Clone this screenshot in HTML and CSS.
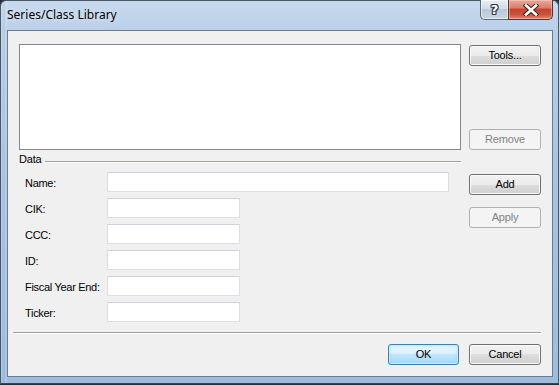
FILE: index.html
```html
<!DOCTYPE html>
<html>
<head>
<meta charset="utf-8">
<link rel="stylesheet" href="styles.css">
</head>
<body>
<div class="window">
  <div class="titlebar">
    <div class="title">Series/Class Library</div>
    <div class="caption">
      <div class="cap-btn help"><span class="q">?</span></div>
      <div class="cap-btn close">
        <svg width="16" height="12" viewBox="0 0 16 12">
          <path d="M3 1.5 L13 10.5 M13 1.5 L3 10.5" stroke="#3a2a28" stroke-width="4.6" stroke-linecap="square" fill="none"/>
          <path d="M3 1.5 L13 10.5 M13 1.5 L3 10.5" stroke="#ffffff" stroke-width="2.6" stroke-linecap="square" fill="none"/>
        </svg>
      </div>
    </div>
  </div>
  <div class="client">
    <div class="top">
      <div class="listbox"></div>
      <div class="side side-top">
        <button class="btn">Tools...</button>
        <button class="btn disabled">Remove</button>
      </div>
    </div>
    <div class="main">
      <div class="left">
        <div class="group-head"><span class="group-label">Data</span><span class="rule"></span></div>
        <div class="fields">
          <div class="row"><span class="label">Name:</span><input class="input wide" type="text"></div>
          <div class="row"><span class="label">CIK:</span><input class="input" type="text"></div>
          <div class="row"><span class="label">CCC:</span><input class="input" type="text"></div>
          <div class="row"><span class="label">ID:</span><input class="input" type="text"></div>
          <div class="row"><span class="label">Fiscal Year End:</span><input class="input" type="text"></div>
          <div class="row"><span class="label">Ticker:</span><input class="input" type="text"></div>
        </div>
      </div>
      <div class="side side-mid">
        <button class="btn">Add</button>
        <button class="btn disabled">Apply</button>
      </div>
    </div>
    <div class="sep"></div>
    <div class="footer">
      <button class="btn default ok">OK</button>
      <button class="btn">Cancel</button>
    </div>
  </div>
</div>
</body>
</html>
```

FILE: styles.css
```css
* { box-sizing: border-box; }

html, body {
  margin: 0;
  padding: 0;
}

body {
  width: 559px;
  height: 385px;
  overflow: hidden;
  background: #26303a;
  font-family: "Liberation Sans", Arial, sans-serif;
  font-size: 11px;
}

.window {
  width: 559px;
  height: 384px;
  border: 1px solid #4a5866;
  border-bottom-color: #3a4552;
  border-radius: 6px 6px 0 0;
  background:
    linear-gradient(90deg, rgba(255,255,255,0.18) 0, rgba(120,160,200,0.15) 3px, rgba(255,255,255,0.2) 5px, rgba(0,0,0,0) 7px),
    linear-gradient(180deg, #c7d9ee 0%, #b9cfe8 8%, #aac5e3 40%, #9dbcdd 100%);
  display: flex;
  flex-direction: column;
}

.titlebar {
  height: 29px;
  display: flex;
  justify-content: space-between;
  align-items: flex-start;
  flex-shrink: 0;
}

.title {
  font-family: "Noto Sans", "Open Sans", sans-serif;
  font-size: 12px;
  line-height: 16px;
  color: #000;
  padding: 6px 0 0 6px;
  text-shadow: 0 0 6px rgba(255,255,255,0.9);
}

.caption {
  display: flex;
  margin-top: -1px;
  margin-right: 5px;
}

.cap-btn {
  height: 20px;
  display: flex;
  align-items: center;
  justify-content: center;
}

.help {
  width: 28px;
  border: 1px solid #5b6a7c;
  border-top: none;
  border-right: none;
  border-radius: 0 0 0 5px;
  background: linear-gradient(180deg, #e7edf4 0%, #d3dde8 45%, #b9c8d9 50%, #c9d6e4 100%);
  box-shadow: inset 0 0 0 1px rgba(255,255,255,0.55);
}

.q {
  font-family: "DejaVu Sans", sans-serif;
  font-weight: bold;
  font-size: 13px;
  line-height: 13px;
  color: #fff;
  text-shadow: 1px 0 0 #2e3846, -1px 0 0 #2e3846, 0 1px 0 #2e3846, 0 -1px 0 #2e3846, 1px 1px 0 #2e3846, -1px -1px 0 #2e3846, 1px -1px 0 #2e3846, -1px 1px 0 #2e3846;
}

.close {
  width: 45px;
  border: 1px solid #6a2a22;
  border-top: none;
  border-radius: 0 0 5px 0;
  background: linear-gradient(180deg, #e9a99a 0%, #d8806e 40%, #c74430 50%, #c9503a 75%, #e08a6a 100%);
  box-shadow: inset 0 0 0 1px rgba(255,220,210,0.45);
}

.client {
  margin-left: 6px;
  width: 546px;
  height: 347px;
  border: 1px solid #687b90;
  background: #f0f0f0;
  padding: 13px 11px 0 11px;
  display: flex;
  flex-direction: column;
}

.top {
  display: flex;
  gap: 8px;
  height: 106px;
}

.listbox {
  width: 442px;
  height: 106px;
  background: #fff;
  border: 1px solid #828790;
}

.side {
  width: 72px;
  display: flex;
  flex-direction: column;
}

.side-top {
  padding-top: 1px;
  justify-content: space-between;
}

.side-mid {
  padding-top: 24px;
  gap: 12px;
}

.btn {
  width: 72px;
  height: 21px;
  margin: 0;
  padding: 0 0 1px 0;
  border: 1px solid #707070;
  border-radius: 3px;
  background: linear-gradient(180deg, #f2f2f2 0%, #ebebeb 50%, #dddddd 50%, #cfcfcf 100%);
  box-shadow: inset 0 0 0 1px #fbfbfb;
  font-family: "Liberation Sans", Arial, sans-serif;
  font-size: 11px;
  letter-spacing: -0.2px;
  color: #000;
  display: flex;
  align-items: center;
  justify-content: center;
}

.btn.disabled {
  border-color: #adb2b5;
  background: #f4f4f4;
  box-shadow: none;
  color: #838383;
}

.btn.default {
  border-color: #3c7fb1;
  background: linear-gradient(180deg, #eaf6fd 0%, #d9f0fc 50%, #bee6fd 50%, #a7d9f5 100%);
  box-shadow: inset 0 0 0 1px #c8ecfb, inset 0 0 2px 1px rgba(120,200,240,0.6);
}

.ok { width: 71px; }

.main {
  display: flex;
  gap: 8px;
}

.left {
  width: 442px;
}

.group-head {
  margin-top: 3px;
  height: 13px;
  display: flex;
  align-items: flex-start;
}

.group-label {
  line-height: 13px;
  color: #000;
  letter-spacing: -0.2px;
}

.rule {
  flex: 1;
  margin-left: 4px;
  margin-top: 8px;
  height: 2px;
  border-top: 1px solid #a0a0a0;
  border-bottom: 1px solid #ffffff;
}

.fields {
  margin-top: 6px;
  padding-left: 6px;
  display: flex;
  flex-direction: column;
  gap: 6px;
}

.row {
  display: flex;
  align-items: center;
  height: 20px;
}

.label {
  width: 82px;
  padding-top: 2px;
  color: #000;
  letter-spacing: -0.3px;
  white-space: nowrap;
}

.input {
  width: 133px;
  height: 20px;
  margin: 0;
  padding: 0;
  border: 1px solid #dcdee4;
  border-top-color: #cfd2d9;
  background: #fff;
  outline: none;
}

.input.wide {
  width: 342px;
}

.sep {
  margin-top: 10px;
  margin-left: -6px;
  height: 2px;
  border-top: 1px solid #a0a0a0;
  border-bottom: 1px solid #ffffff;
}

.footer {
  margin-top: 10px;
  display: flex;
  justify-content: flex-end;
  gap: 10px;
}
```
